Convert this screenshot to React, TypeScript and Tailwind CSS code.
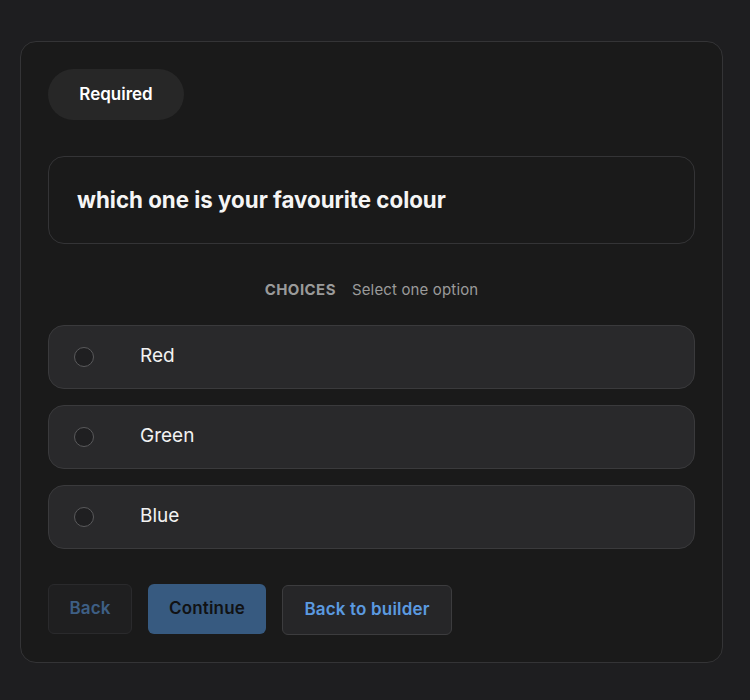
export default function App() {
  const options = ["Red", "Green", "Blue"];
  return (
    <div
      className="min-h-[700px] w-full bg-[#1e1e20] px-5 pt-[41px] pb-[37px]"
      style={{ fontFamily: "Inter, 'Noto Sans', sans-serif" }}
    >
      <div className="w-[703px] rounded-[16px] border border-[#343436] bg-[#1a1a1a] px-[27px] pt-[27px] pb-[27px]">
        <div className="flex">
          <div className="flex h-[51px] w-[136px] items-center justify-center rounded-full bg-[#272727] text-[17px] font-semibold text-white">
            Required
          </div>
        </div>
        <div className="mt-9 flex h-[88px] items-center rounded-[16px] border border-[#343436] px-7 text-[22.3px] font-bold text-[#f5f5f5]">
          which one is your favourite colour
        </div>
        <div className="mt-[35px] flex items-center justify-center gap-4 text-[15px] text-[#9a9a9a]">
          <span className="font-bold tracking-[0.03em]">CHOICES</span>
          <span className="tracking-[0.01em]">Select one option</span>
        </div>
        <div className="mt-[23px] flex flex-col gap-4">
          {options.map((o) => (
            <div
              key={o}
              className="flex h-[64px] items-center rounded-[16px] border border-[#3a3a3c] bg-[#29292b] pl-[25px]"
            >
              <div className="h-[20px] w-[20px] rounded-full border border-[#5a5a5c] bg-[#1f1f21]" />
              <span className="ml-[46px] text-[19px] text-[#f2f2f2]">{o}</span>
            </div>
          ))}
        </div>
        <div className="mt-[35px] flex items-start gap-4">
          <button className="flex h-[50px] w-[84px] items-center justify-center rounded-[6px] border border-[#2a2a2c] bg-[#1f1f20] text-[17px] font-semibold tracking-[0.01em] text-[#3e5f85]">
            Back
          </button>
          <button className="flex h-[50px] w-[118px] items-center justify-center rounded-[6px] bg-[#375a80] text-[17px] font-semibold tracking-[0.01em] text-[#111214]">
            Continue
          </button>
          <button className="mt-px flex h-[50px] w-[170px] items-center justify-center rounded-[6px] border border-[#3c3c3e] bg-[#262628] text-[17px] font-semibold tracking-[0.01em] text-[#5b9ae0]">
            Back to builder
          </button>
        </div>
      </div>
    </div>
  );
}
